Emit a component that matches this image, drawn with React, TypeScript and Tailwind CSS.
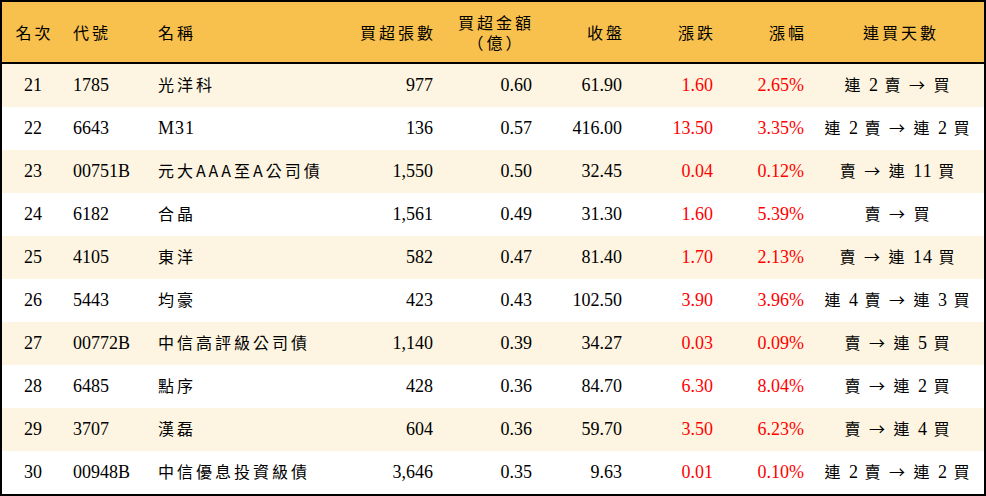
import React from "react";

type Row = string[];

const rows: Row[] = [
  ["21", "1785", "光洋科", "977", "0.60", "61.90", "1.60", "2.65%", "連 2 賣 → 買"],
  ["22", "6643", "M31", "136", "0.57", "416.00", "13.50", "3.35%", "連 2 賣 → 連 2 買"],
  ["23", "00751B", "元大AAA至A公司債", "1,550", "0.50", "32.45", "0.04", "0.12%", "賣 → 連 11 買"],
  ["24", "6182", "合晶", "1,561", "0.49", "31.30", "1.60", "5.39%", "賣 → 買"],
  ["25", "4105", "東洋", "582", "0.47", "81.40", "1.70", "2.13%", "賣 → 連 14 買"],
  ["26", "5443", "均豪", "423", "0.43", "102.50", "3.90", "3.96%", "連 4 賣 → 連 3 買"],
  ["27", "00772B", "中信高評級公司債", "1,140", "0.39", "34.27", "0.03", "0.09%", "賣 → 連 5 買"],
  ["28", "6485", "點序", "428", "0.36", "84.70", "6.30", "8.04%", "賣 → 連 2 買"],
  ["29", "3707", "漢磊", "604", "0.36", "59.70", "3.50", "6.23%", "賣 → 連 4 買"],
  ["30", "00948B", "中信優息投資級債", "3,646", "0.35", "9.63", "0.01", "0.10%", "連 2 賣 → 連 2 買"],
];

const CJK = /[\u2190-\u21ff\u3000-\u9fff\uff00-\uffef]/;

function Mixed({ text, cjkLatin = false }: { text: string; cjkLatin?: boolean }) {
  const runs: { cjk: boolean; s: string }[] = [];
  for (const ch of text) {
    let isC = CJK.test(ch);
    if (cjkLatin && /[A-Z]/.test(ch)) isC = true;
    const last = runs[runs.length - 1];
    if (last && last.cjk === isC) last.s += ch;
    else runs.push({ cjk: isC, s: ch });
  }
  return (
    <>
      {runs.map((r, i) =>
        r.cjk ? (
          <span
            key={i}
            className="font-['Noto_Sans_CJK_TC',sans-serif] text-[16px] tracking-[3px]"
          >
            {r.s}
          </span>
        ) : (
          <span key={i} className="tracking-[1px]">{r.s}</span>
        )
      )}
    </>
  );
}

const grid =
  "grid grid-cols-[62px_86px_190px_105px_100px_90px_90px_90px_1fr]";

function HeadCell({ children, className }: { children: React.ReactNode; className?: string }) {
  return (
    <div className={"flex items-center " + (className ?? "")}>
      <span className="font-['Noto_Sans_CJK_TC',sans-serif] text-[16px] tracking-[3px] leading-[18px] text-black">
        {children}
      </span>
    </div>
  );
}

export default function App() {
  return (
    <div className="w-[986px] h-[496px] border-2 border-black bg-white font-['Liberation_Serif','Noto_Sans_CJK_TC',serif] text-[18px] text-black">
      <div className={grid + " h-[62px] bg-[#f8c14e] border-b-2 border-black"}>
        <HeadCell className="justify-center pl-[3px]">名次</HeadCell>
        <HeadCell className="pl-[9px]">代號</HeadCell>
        <HeadCell className="pl-[8px]">名稱</HeadCell>
        <HeadCell className="justify-end pr-[9px]">買超張數</HeadCell>
        <div className="flex flex-col items-center justify-center gap-[2px] pl-[2px]">
          <span className="font-['Noto_Sans_CJK_TC',sans-serif] text-[16px] tracking-[3px] leading-[18px]">買超金額</span>
          <span className="font-['Noto_Sans_CJK_TC',sans-serif] text-[16px] tracking-[3px] leading-[18px]">（億）</span>
        </div>
        <HeadCell className="justify-end pr-[10px]">收盤</HeadCell>
        <HeadCell className="justify-end pr-[9px]">漲跌</HeadCell>
        <HeadCell className="justify-end pr-[8px]">漲幅</HeadCell>
        <HeadCell className="justify-center pl-[3px]">連買天數</HeadCell>
      </div>
      {rows.map((r, i) => (
        <div
          key={r[0]}
          className={grid + " h-[43px] items-center " + (i % 2 === 0 ? "bg-[#fdf5e1]" : "bg-white")}
        >
          <div className="text-center">{r[0]}</div>
          <div className="pl-[9px]">{r[1]}</div>
          <div className="pl-[8px] whitespace-nowrap">
            <Mixed text={r[2]} cjkLatin={r[2].startsWith("元大")} />
          </div>
          <div className="text-right pr-[12px]">{r[3]}</div>
          <div className="text-right pr-[13px]">{r[4]}</div>
          <div className="text-right pr-[13px]">{r[5]}</div>
          <div className="text-right pr-[12px] text-[#ff0000]">{r[6]}</div>
          <div className="text-right pr-[11px] text-[#ff0000]">{r[7]}</div>
          <div className="text-center whitespace-nowrap pr-[2px]">
            <Mixed text={r[8]} />
          </div>
        </div>
      ))}
    </div>
  );
}
